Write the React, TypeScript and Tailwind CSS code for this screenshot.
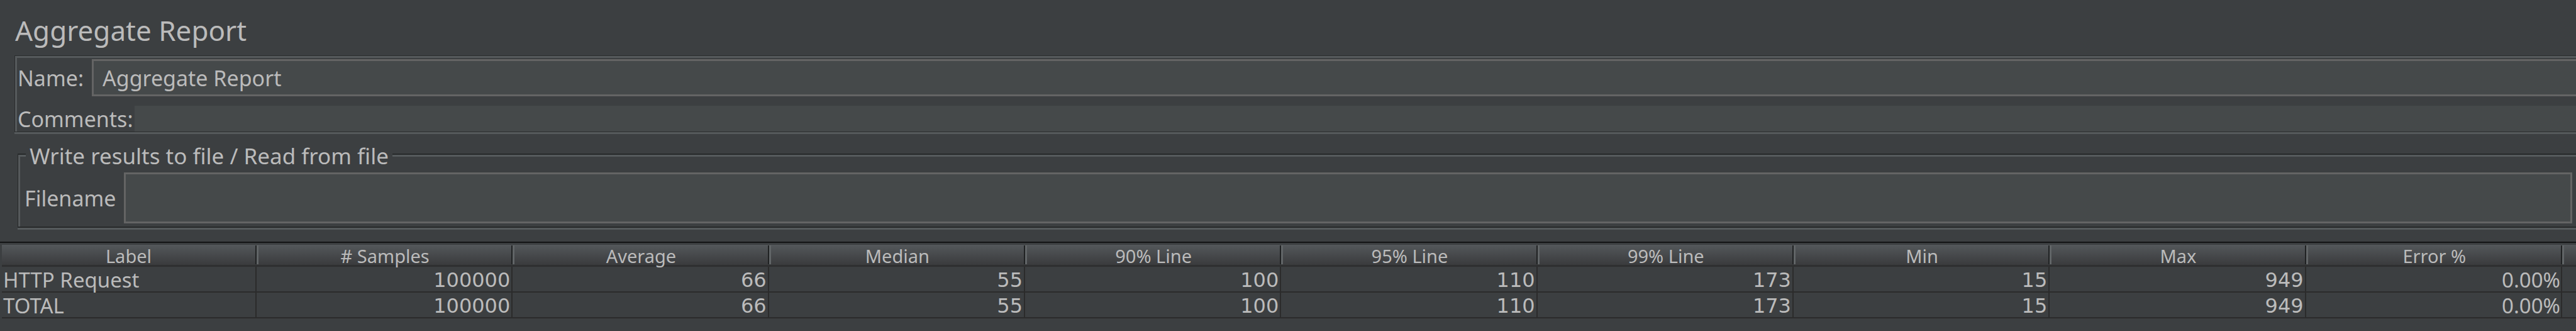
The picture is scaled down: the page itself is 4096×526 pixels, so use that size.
type Row = { label: string; values: string[]; error: string };

const columns = [
  "Label",
  "# Samples",
  "Average",
  "Median",
  "90% Line",
  "95% Line",
  "99% Line",
  "Min",
  "Max",
  "Error %",
];

const rows: Row[] = [
  { label: "HTTP Request", values: ["100000", "66", "55", "100", "110", "173", "15", "949"], error: "0.00%" },
  { label: "TOTAL", values: ["100000", "66", "55", "100", "110", "173", "15", "949"], error: "0.00%" },
];

function NamePanel() {
  return (
    <section className="ml-[23px] border-l border-t border-[#2b2d2e]">
      <div className="border-l-[3px] border-t-[3px] border-[#565a5c] pt-[2px]">
        <div className="flex h-[59px] items-center">
          <label htmlFor="name" className="w-[119px] shrink-0 pl-px">
            Name:
          </label>
          <input
            id="name"
            type="text"
            defaultValue="Aggregate Report"
            className="h-full min-w-0 flex-1 border-y-[3px] border-l-[3px] border-[#646464] bg-[#45494a] pl-[14px] outline-none"
          />
        </div>
        <div className="mt-[15px] flex h-[41px] items-center">
          <label htmlFor="comments" className="w-[187px] shrink-0 whitespace-nowrap pl-px">
            Comments:
          </label>
          <input id="comments" type="text" className="h-full min-w-0 flex-1 bg-[#45494a] outline-none" />
        </div>
      </div>
      <div className="-ml-px h-[4px] border-t border-[#2b2d2e] bg-[#565a5c]" />
    </section>
  );
}

function FilePanel() {
  return (
    <section role="group" aria-labelledby="file-title" className="ml-[28px] mt-[14px]">
      <div className="flex h-[40px]">
        <div className="mt-[17px] w-[13px] border-l border-t-2 border-[#27292a]">
          <div className="h-full border-l-[3px] border-t-[3px] border-[#565a5c]" />
        </div>
        <h2 id="file-title" className="whitespace-nowrap px-[6px] text-[35px] leading-[42px]">
          Write results to file / Read from file
        </h2>
        <div className="mt-[17px] h-[5px] flex-1 border-t-2 border-[#27292a] bg-[#565a5c]" />
      </div>
      <div className="border-l border-[#27292a]">
        <div className="border-l-[3px] border-[#565a5c] pb-[5px] pl-[6px] pr-[6px] pt-[7px]">
          <div className="flex h-[81px] items-center">
            <label htmlFor="filename" className="w-[159px] shrink-0 pl-px">
              Filename
            </label>
            <input
              id="filename"
              type="text"
              className="h-full min-w-0 flex-1 border-[3px] border-[#646464] bg-[#45494a] px-3 outline-none"
            />
          </div>
        </div>
      </div>
      <div className="h-[5px] border-t-2 border-[#27292a] bg-[#565a5c]" />
    </section>
  );
}

function HeaderCell({ text, first }: { text: string; first: boolean }) {
  return (
    <th scope="col" className="border-b-[3px] border-[#2e2f30] p-0 pt-[3px] font-normal">
      <div className="flex h-[32px] bg-linear-to-b from-[#54585b] to-[#3a3b3d]">
        {!first && <div className="my-px w-[3px] bg-[#616567]" />}
        <div className="flex-1 text-center text-[29px] leading-[36px]">{text}</div>
        <div className="my-px w-[2px] bg-[#202223]" />
      </div>
    </th>
  );
}

function ResultsTable() {
  return (
    <div className="mt-[19px] border-t-2 border-[#131415] pl-[3px]">
      <table className="w-full table-fixed border-separate border-spacing-0">
        <colgroup>
          <col className="w-[405px]" />
          {columns.slice(1).map((c) => (
            <col key={c} />
          ))}
          <col className="w-[22px]" />
        </colgroup>
        <thead>
          <tr>
            {columns.map((c, i) => (
              <HeaderCell key={c} text={c} first={i === 0} />
            ))}
            <td className="border-b-[3px] border-[#2e2f30] p-0 pt-[3px]">
              <div className="flex h-[32px] bg-linear-to-b from-[#54585b] to-[#3a3b3d]">
                <div className="my-px w-[3px] bg-[#616567]" />
              </div>
            </td>
          </tr>
        </thead>
        <tbody className="text-[33px] leading-[37px]">
          {rows.map((r) => (
            <tr key={r.label}>
              <th
                scope="row"
                className="border-b-2 border-r-2 border-[#2b2b2b] pb-0 pl-[2px] pr-0 pt-[2px] text-left font-normal"
              >
                {r.label}
              </th>
              {r.values.map((v, i) => (
                <td
                  key={columns[i + 1]}
                  className="border-b-2 border-r-2 border-[#2b2b2b] pb-0 pl-0 pr-[2px] pt-[4px] text-right font-['DejaVu_Sans',sans-serif] text-[32px] leading-[35px]"
                >
                  {v}
                </td>
              ))}
              <td className="border-b-2 border-r-2 border-[#2b2b2b] pb-0 pl-0 pr-px pt-[2px] text-right">{r.error}</td>
              <td className="border-b-2 border-[#2b2b2b] p-0" />
            </tr>
          ))}
        </tbody>
      </table>
    </div>
  );
}

export default function App() {
  return (
    <main className="min-h-screen overflow-hidden bg-[#3c3f41] font-['Noto_Sans',sans-serif] text-[34px] leading-[40px] text-[#bbbbbb]">
      <h1 className="pb-[10px] pl-[24px] pt-[18px] text-[44px] leading-[60px]">Aggregate Report</h1>
      <NamePanel />
      <FilePanel />
      <ResultsTable />
    </main>
  );
}
